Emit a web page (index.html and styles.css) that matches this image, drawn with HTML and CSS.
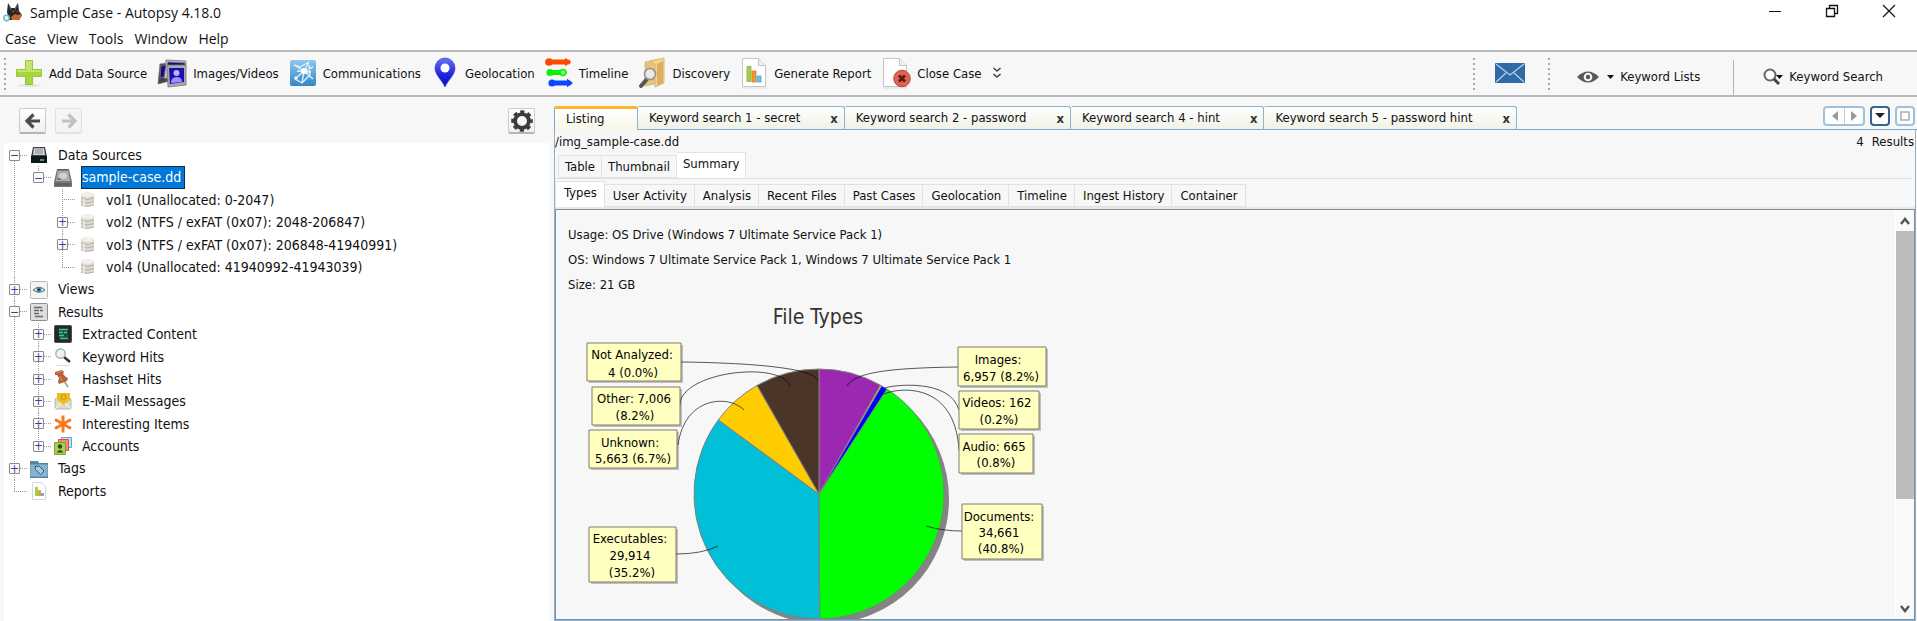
FILE: index.html
```html
<!DOCTYPE html>
<html lang="en">
<head>
<meta charset="utf-8">
<title>Sample Case - Autopsy 4.18.0</title>
<link rel="stylesheet" href="styles.css">
</head>
<body>
<header class="titlebar">
  <svg class="app-icon" width="20" height="20" viewBox="0 0 20 20"><path d="M5 1l3 5h4l3-5 1 8 3 4-3 5H6L4 10z" fill="#27272b"/><path d="M6 3l2 5M14 3l-2 5" fill="none" stroke="#6a6a72"/><path d="M8 15l4-3 3 1 3-1 1 2-4 4H9z" fill="#c4682a"/><path d="M9 9l2 1M14 9l1 1" stroke="#b86a30"/><circle cx="3.500" cy="16" r="2.800" fill="#dff3fa" stroke="#6fb0c8" stroke-width="1.300"/></svg>
  <h1 class="title">Sample Case - Autopsy 4.18.0</h1>
  <div class="window-controls">
    <button aria-label="Minimize"><svg width="14" height="14" viewBox="0 0 14 14"><path d="M1 7.500h12" stroke="#111" fill="none"/></svg></button>
    <button aria-label="Restore"><svg width="14" height="14" viewBox="0 0 14 14"><path d="M1.500 4.500h8v8h-8zM4.500 4V1.500h8v8H10" stroke="#111" stroke-width="1.300" fill="none"/></svg></button>
    <button aria-label="Close"><svg width="14" height="14" viewBox="0 0 14 14"><path d="M1 1l12 12M13 1L1 13" stroke="#111" stroke-width="1.200" fill="none"/></svg></button>
  </div>
</header>
<nav class="menubar">
  <button>Case</button><button>View</button><button>Tools</button><button>Window</button><button>Help</button>
</nav>
<div class="toolbar">
  <span class="grip"></span>
  <div class="tools">
    <button class="tool"><svg width="28" height="32" viewBox="0 0 28 32"><ellipse cx="14" cy="28.500" rx="12" ry="1.500" fill="#e2e2e2"/><path d="M10.500 3.500h7v9h9v7h-9v8h-7v-8h-9v-7h9z" fill="#a9d63c" stroke="#98c53a"/><path d="M11 4h6v9h9v2H2v-2h9z" fill="#c3e46e"/></svg>Add Data Source</button>
    <button class="tool"><svg width="30" height="32" viewBox="0 0 30 32"><g stroke="#777" stroke-width=".8"><path d="M3 7l20-2-3 17-19 5z" fill="#444"/><path d="M9 3l20 1-1 21-21-4z" fill="#b9bbbf"/><path d="M11 5l17 1v4L10 9z" fill="#160a86"/><path d="M4 9l5-1-2 12-4 1z" fill="#160a86"/><path d="M10 8h19v20l-18 2z" fill="#a7a9ad"/></g><path d="M12 11h15v14l-14 2z" fill="#1c0fb0"/><circle cx="19.500" cy="16" r="3" fill="#b9b4ff"/><path d="M14 26q0-6 5.500-6t5.500 5z" fill="#9a92ff"/></svg>Images/Videos</button>
    <button class="tool"><svg width="28" height="32" viewBox="0 0 28 32"><defs><linearGradient id="sky" x2="0" y2="1"><stop stop-color="#8cc8ee"/><stop offset="1" stop-color="#3487c4"/></linearGradient></defs><rect x="1" y="3" width="26" height="26" rx="2" fill="url(#sky)"/><path d="M15 14L5 8M15 14l5-9M15 14l9-4M15 14l-9 8M15 14l-2 12M15 14l9 8M5 8l6 2 9-5M6 22l7 4 8-8-1-10M8 14l14 1" stroke="#dff1fc" stroke-width="1.400" fill="none"/><circle cx="15" cy="14" r="3" fill="#fff"/><circle cx="7" cy="21" r="1.800" fill="#e8f5fd"/></svg>Communications</button>
    <button class="tool"><svg width="28" height="32" viewBox="0 0 28 32"><defs><linearGradient id="pin" x2="0" y2="1"><stop stop-color="#6a72f2"/><stop offset=".6" stop-color="#1c20e0"/><stop offset="1" stop-color="#0a0ad8"/></linearGradient></defs><path d="M14 30C11 23 4 18 4 11a10 10 0 0 1 20 0c0 7-7 12-10 19z" fill="url(#pin)" stroke="#3c3ccf" stroke-width=".7"/><circle cx="14" cy="11" r="4.500" fill="#fff"/></svg>Geolocation</button>
    <button class="tool"><svg width="28" height="32" viewBox="0 0 28 32"><g stroke-width="5" stroke-linecap="round"><path d="M3 5h20" stroke="#ff4a00"/><path d="M5 15.500h14" stroke="#0cf00c"/><path d="M7 26h17" stroke="#0a48ff"/></g><circle cx="4" cy="5" r="3.800" fill="#ff4a00"/><path d="M20 .8l6 4.200-6 4.200z" fill="#ff4a00"/><circle cx="5" cy="15.500" r="3.600" fill="#0cf00c"/><circle cx="18" cy="15.500" r="3" fill="#7dfb7d" stroke="#0cf00c" stroke-width="1.600"/><circle cx="7" cy="26" r="3.600" fill="#0a48ff"/><path d="M22 21.800l6 4.200-6 4.200z" fill="#0a48ff"/></svg>Timeline</button>
    <button class="tool"><svg width="28" height="32" viewBox="0 0 28 32"><path d="M7 5l14-3v24L7 29z" fill="#e8c27c" stroke="#cfa65e" stroke-width=".6"/><path d="M12 4l14-3v25l-9 4V7z" fill="#f2d494" stroke="#d5ad66" stroke-width=".8"/><path d="M19 7l6-3v22l-6 3z" fill="#dcae62"/><path d="M9 22l-6 7" stroke="#555" stroke-width="4" stroke-linecap="round"/><circle cx="12" cy="17" r="5.500" fill="#eef0f0" fill-opacity=".85" stroke="#909498" stroke-width="1.600"/></svg>Discovery</button>
    <button class="tool"><svg width="28" height="32" viewBox="0 0 28 32"><path d="M2 31h25" stroke="#ddd"/><path d="M2.500 1.500h16l7 7v21h-23z" fill="#fff" stroke="#c4c4c4"/><path d="M18.500 1.500v7h7" fill="#f0f0f0" stroke="#c4c4c4"/><path d="M7 9.500h4v15H7z" fill="#a4cf4e" stroke="#86b336" stroke-width=".8"/><path d="M12 14h4v11h-4z" fill="#f09a3a" stroke="#d47d22" stroke-width=".8"/><path d="M17 19h4v6h-4z" fill="#6cc4e8" stroke="#45a6d0" stroke-width=".8"/></svg>Generate Report</button>
    <button class="tool"><svg width="30" height="32" viewBox="0 0 30 32"><path d="M2 31h25" stroke="#ddd"/><path d="M2.500 1.500h16l7 7v21h-23z" fill="#fff" stroke="#c4c4c4"/><path d="M18.500 1.500v7h7" fill="#f0f0f0" stroke="#c4c4c4"/><circle cx="21" cy="21.500" r="8.300" fill="#df6450" stroke="#b8483a"/><path d="M18 18.500l6 6M24 18.500l-6 6" stroke="#5c1810" stroke-width="2.600"/></svg>Close Case</button>
    <button class="tool" aria-label="More"><svg width="10" height="14" viewBox="0 0 10 14"><path d="M1.500 2L5 5l3.500-3M1.500 8L5 11l3.500-3" fill="none" stroke="#444" stroke-width="1.600"/></svg></button>
  </div>
  <div class="tools-right">
    <span class="grip"></span>
    <button class="mail" aria-label="Messages"><svg width="32" height="22" viewBox="0 0 32 22"><rect x="1" y="1" width="30" height="20" rx="1" fill="#2e6aa5"/><path d="M2 2l14 11L30 2M2 20l10-9M30 20l-10-9" fill="none" stroke="#b9d2e8" stroke-width="1.200"/></svg></button>
    <span class="grip"></span>
    <button class="tool lists"><svg width="38" height="16" viewBox="0 0 38 16"><path d="M1 8Q12-3 23 8 12 19 1 8z" fill="#555a5c"/><circle cx="12" cy="8" r="4.300" fill="#f7f7f7"/><circle cx="12" cy="8" r="2.200" fill="#555a5c"/><path d="M31 6h7l-3.500 4z" fill="#111"/></svg>Keyword Lists</button>
    <span class="divider"></span>
    <button class="tool search"><svg width="20" height="20" viewBox="0 0 20 20"><circle cx="7" cy="8" r="5.500" fill="#fff" stroke="#666" stroke-width="2"/><path d="M11 12l5 5" stroke="#444" stroke-width="3"/><path d="M13 8h7l-3.500 4z" fill="#111"/></svg>Keyword Search</button>
  </div>
</div>

<main class="workspace">
  <section class="explorer">
    <div class="nav-row">
      <button class="nav-btn" aria-label="Back"><svg width="18" height="18" viewBox="0 0 18 18"><path d="M16 9H3M9.500 2.500L3 9l6.500 6.500" fill="none" stroke="#4c4c4c" stroke-width="3.200"/></svg></button>
      <button class="nav-btn off" aria-label="Forward" disabled><svg width="18" height="18" viewBox="0 0 18 18"><path d="M2 9h13M8.500 2.500L15 9l-6.500 6.500" fill="none" stroke="#c2c2c2" stroke-width="3.200"/></svg></button>
      <button class="nav-btn gear" aria-label="Settings"><svg width="22" height="22" viewBox="0 0 22 22"><circle cx="11" cy="11" r="9" fill="none" stroke="#3c3c3c" stroke-width="3.600" stroke-dasharray="4 3.069" stroke-dashoffset="2"/><circle cx="11" cy="11" r="6.900" fill="none" stroke="#3c3c3c" stroke-width="3.800"/></svg></button>
    </div>
    <ul class="tree">
      <li><div class="row"><button class="exp" aria-label="Collapse">−</button><i class="link"></i><svg width="18" height="18" viewBox="0 0 18 18"><path d="M3 1h12l2 10H1z" fill="#3c4044"/><path d="M4 2h10l1 7H3z" fill="#d4d6d8"/><path d="M5 3h8M5 5h8M5 7h8" stroke="#888"/><path d="M1 10h16v7H1z" fill="#121416"/><path d="M10 13h4v2h-4z" fill="#20a8a0"/></svg><span>Data Sources</span></div>
        <ul>
          <li><div class="row"><button class="exp" aria-label="Collapse">−</button><i class="link"></i><svg width="18" height="18" viewBox="0 0 18 18"><path d="M3 0h12l3 13v5H0v-5z" fill="#77797c"/><path d="M4 1h10l2 11H2z" fill="#b0b2b4"/><ellipse cx="9" cy="7" rx="5" ry="4" fill="#cfd1d2" stroke="#8d8f91" stroke-width=".8"/><path d="M4 1h10M3 10h4" stroke="#444"/><path d="M1 14h16v3H1z" fill="#606366"/></svg><span class="selected">sample-case.dd</span></div>
            <ul>
              <li><div class="row"><i class="leaf"></i><i class="link"></i><svg width="18" height="18" viewBox="0 0 18 18"><use href="#vol"/></svg><span>vol1 (Unallocated: 0-2047)</span></div></li>
              <li><div class="row"><button class="exp" aria-label="Expand">+</button><i class="link"></i><svg width="18" height="18" viewBox="0 0 18 18"><g id="vol"><path d="M3 4v10q6 3 13 0V4z" fill="#dcd9d0"/><ellipse cx="9.500" cy="4" rx="6.500" ry="2.200" fill="#f3f1ec" stroke="#dedbd3" stroke-width=".6"/><path d="M3 7q6 3 13 0M3 10.500q6 3 13 0M3 14q6 3 13 0" fill="none" stroke="#b5b1a5"/><path d="M6 7.500v8" stroke="#efede7" stroke-width="1.500"/></g></svg><span>vol2 (NTFS / exFAT (0x07): 2048-206847)</span></div></li>
              <li><div class="row"><button class="exp" aria-label="Expand">+</button><i class="link"></i><svg width="18" height="18" viewBox="0 0 18 18"><use href="#vol"/></svg><span>vol3 (NTFS / exFAT (0x07): 206848-41940991)</span></div></li>
              <li><div class="row"><i class="leaf"></i><i class="link"></i><svg width="18" height="18" viewBox="0 0 18 18"><use href="#vol"/></svg><span>vol4 (Unallocated: 41940992-41943039)</span></div></li>
            </ul>
          </li>
        </ul>
      </li>
      <li><div class="row"><button class="exp" aria-label="Expand">+</button><i class="link"></i><svg width="18" height="18" viewBox="0 0 18 18"><rect x=".5" y=".5" width="17" height="17" rx="1" fill="#f3f3f3" stroke="#b9b9b9"/><path d="M3 9Q9 3.500 15 9 9 13.500 3 9z" fill="#e6eef0" stroke="#666"/><circle cx="9" cy="8.800" r="2.500" fill="#2c93a4"/><circle cx="9" cy="8.800" r="1" fill="#123"/></svg><span>Views</span></div></li>
      <li><div class="row"><button class="exp" aria-label="Collapse">−</button><i class="link"></i><svg width="18" height="18" viewBox="0 0 18 18"><rect x=".5" y=".5" width="17" height="17" rx="1" fill="#dedede" stroke="#8e8e8e"/><path d="M4 4.500h8M4 7.500h5M10 7.500h3M4 10.500h5M5 13.500h8" stroke="#666" stroke-width="1.400"/></svg><span>Results</span></div>
        <ul>
          <li><div class="row"><button class="exp" aria-label="Expand">+</button><i class="link"></i><svg width="18" height="18" viewBox="0 0 18 18"><rect x=".5" y=".5" width="17" height="17" rx="1" fill="#24282a" stroke="#4c5052"/><path d="M4 4h10v10H6z" fill="#1d4d40"/><path d="M5 4.500h9M5 7.500h4M10 7.500h3M5 10.500h5M6 13.500h8" stroke="#3cc49a" stroke-width="1.600"/></svg><span>Extracted Content</span></div></li>
          <li><div class="row"><button class="exp" aria-label="Expand">+</button><i class="link"></i><svg width="18" height="18" viewBox="0 0 18 18"><path d="M10 9l6 5" stroke="#333" stroke-width="2.400"/><circle cx="6.500" cy="5.500" r="4.700" fill="#e9f2f4" stroke="#a0a8aa" stroke-width="1.300"/><path d="M2 17.500h14" stroke="#e0e0e0"/></svg><span>Keyword Hits</span></div></li>
          <li><div class="row"><button class="exp" aria-label="Expand">+</button><i class="link"></i><svg width="18" height="18" viewBox="0 0 18 18"><path d="M10 11l4 6" stroke="#999" stroke-width="1.400"/><path d="M1 2l7-2 2 2-1 2 3 3 2 1-1 3-8 3-1-2 1-4-2-3H1z" fill="#b5613a"/><path d="M3 3l5-2M6 6l2 5" stroke="#d48a62" stroke-width="1.300"/></svg><span>Hashset Hits</span></div></li>
          <li><div class="row"><button class="exp" aria-label="Expand">+</button><i class="link"></i><svg width="18" height="18" viewBox="0 0 18 18"><path d="M1 7l8-5 8 5v10H1z" fill="#dcdcd4" stroke="#a8a8a0" stroke-width=".8"/><path d="M3 1h13v7l-6.500 5L3 8z" fill="#efbd20"/><circle cx="9.500" cy="5" r="2.500" fill="none" stroke="#c48e0a"/><path d="M1 17l6-6M17 17l-6-6" stroke="#fff"/></svg><span>E-Mail Messages</span></div></li>
          <li><div class="row"><button class="exp" aria-label="Expand">+</button><i class="link"></i><svg width="18" height="18" viewBox="0 0 18 18"><path d="M9 .5v17M1 4.500l16 9M17 4.500l-16 9" stroke="#f97a1c" stroke-width="3"/></svg><span>Interesting Items</span></div></li>
          <li><div class="row"><button class="exp" aria-label="Expand">+</button><i class="link"></i><svg width="18" height="18" viewBox="0 0 18 18"><path d="M7.500.5h10v10h-10z" fill="#bfe3f5" stroke="#56a8d6"/><path d="M4.500 2.500h10v11h-10z" fill="#f58a78" stroke="#e0503c"/><path d="M.5 5.500h11v12H.5z" fill="#a4d154" stroke="#75a828"/><circle cx="6" cy="9.500" r="2.200" fill="#34441c"/><path d="M2.500 15.500q3.500-5 7 0z" fill="#34441c"/></svg><span>Accounts</span></div></li>
        </ul>
      </li>
      <li><div class="row"><button class="exp" aria-label="Expand">+</button><i class="link"></i><svg width="18" height="18" viewBox="0 0 18 18"><path d="M0 1h8l1 2h9v15H0z" fill="#5787a8"/><path d="M0 4h18v13H0z" fill="#86b3d0" stroke="#4f7f9f" stroke-width=".8"/><path d="M5 6.500l4-.5 5 5-3.500 3.500-5-5z" fill="#a9cce0" stroke="#2f5670"/></svg><span>Tags</span></div></li>
      <li><div class="row"><i class="leaf"></i><i class="link"></i><svg width="18" height="18" viewBox="0 0 18 18"><path d="M2.500.5h9l4 4v13h-13z" fill="#fff" stroke="#d5d5d5"/><path d="M5 5h3v9H5z" fill="#a4cf4e"/><path d="M8 8h3v6H8z" fill="#f09a3a"/><path d="M11 11h3v3h-3z" fill="#5cb8e0"/></svg><span>Reports</span></div></li>
    </ul>
  </section>

  <section class="viewer">
    <div class="doc-tabs">
      <button class="doc-tab active">Listing</button>
      <button class="doc-tab">Keyword search 1 - secret<b>x</b></button>
      <button class="doc-tab">Keyword search 2 - password<b>x</b></button>
      <button class="doc-tab">Keyword search 4 - hint<b>x</b></button>
      <button class="doc-tab">Keyword search 5 - password hint<b>x</b></button>
      <div class="tab-controls">
        <span class="pair"><button aria-label="Previous tab"><svg width="8" height="12" viewBox="0 0 8 12"><path d="M7 1v10L1 6z" fill="#999"/></svg></button><button aria-label="Next tab"><svg width="8" height="12" viewBox="0 0 8 12"><path d="M1 1v10l6-5z" fill="#999"/></svg></button></span>
        <button class="ctl strong" aria-label="Tab list"><svg width="12" height="6" viewBox="0 0 12 6"><path d="M1 0h10L6 5z" fill="#222"/></svg></button>
        <button class="ctl" aria-label="Maximize"><svg width="10" height="10" viewBox="0 0 10 10"><path d="M1 1h8v8H1z" fill="none" stroke="#aaa" stroke-width="1.500"/></svg></button>
      </div>
    </div>
    <div class="listing">
      <div class="path-row"><span>/img_sample-case.dd</span><span class="count"><span>4</span><span>Results</span></span></div>
      <div class="tabs first"><button>Table</button><button>Thumbnail</button><button class="on">Summary</button></div>
      <div class="tabs second"><button class="on">Types</button><button>User Activity</button><button>Analysis</button><button>Recent Files</button><button>Past Cases</button><button>Geolocation</button><button>Timeline</button><button>Ingest History</button><button>Container</button></div>
      <div class="panel">
        <div class="content">
          <p>Usage: OS Drive (Windows 7 Ultimate Service Pack 1)</p>
          <p>OS: Windows 7 Ultimate Service Pack 1, Windows 7 Ultimate Service Pack 1</p>
          <p>Size: 21 GB</p>
          <svg class="chart" width="520" height="350" viewBox="0 0 520 350" role="img" aria-label="File Types">
            <text class="chart-title" x="258" y="34">File Types</text>
            <circle cx="264" cy="209" r="125" fill="#848484"/>
            <g stroke="#808080" stroke-linejoin="round">
              <path d="M259 204V79A125 125 0 0 1 320.500 95.200z" fill="#9c27b0"/>
              <path d="M259 204L320.500 95.200A125 125 0 0 1 321.800 95.900z" fill="#ffeb3b"/>
              <path d="M259 204L321.800 95.900A125 125 0 0 1 327 99.100z" fill="#0000ff" stroke-width=".5"/>
              <path d="M259 204L327 99.100A125 125 0 0 1 259.700 329z" fill="#00ff00"/>
              <path d="M259 204L259.700 329A125 125 0 0 1 158.300 129.900z" fill="#00bfd6"/>
              <path d="M259 204L158.300 129.900A125 125 0 0 1 197.100 95.400z" fill="#ffcc00"/>
              <path d="M259 204L197.100 95.400A125 125 0 0 1 259 79z" fill="#4a3528"/>
            </g>
            <g fill="none" stroke="#000" stroke-opacity=".65">
              <path d="M121 72C200 73 256 79 258 91"/><path d="M120 115C120 82 220 70 230 96"/><path d="M118 155C125 105 170 105 184 120"/><path d="M116 264Q142 264 158 256"/>
              <path d="M398 77C330 78 295 82 287 96"/><path d="M399 120C390 88 332 95 325 98"/><path d="M399 160C395 92 340 97 324 104"/><path d="M402 241Q382 241 366 236"/>
            </g>
            <g fill="#000" fill-opacity=".22"><path d="M29 55h94v38H29zM34 99h88v38H34zM31 142h88v38H31zM31 239h87v55H31zM400 59h88v39h-88zM401 103h80v38h-80zM401 146h74v39h-74zM404 216h80v55h-80z"/></g>
            <g fill="#ffffc0" stroke="#7c7c6c"><path d="M27 53h94v38H27zM32 97h88v38H32zM29 140h88v38H29zM29 237h87v55H29zM398 57h88v39h-88zM399 101h80v38h-80zM399 144h74v39h-74zM402 214h80v55h-80z"/></g>
            <g class="chart-labels">
              <text x="72" y="69">Not Analyzed:</text><text x="73" y="87">4 (0.0%)</text>
              <text x="74" y="113">Other: 7,006</text><text x="75" y="130">(8.2%)</text>
              <text x="70" y="157">Unknown:</text><text x="73" y="173">5,663 (6.7%)</text>
              <text x="70" y="253">Executables:</text><text x="70" y="270">29,914</text><text x="72" y="287">(35.2%)</text>
              <text x="438" y="74">Images:</text><text x="441" y="91">6,957 (8.2%)</text>
              <text x="437" y="117">Videos: 162</text><text x="439" y="134">(0.2%)</text>
              <text x="434" y="161">Audio: 665</text><text x="436" y="177">(0.8%)</text>
              <text x="439" y="231">Documents:</text><text x="439" y="247">34,661</text><text x="441" y="263">(40.8%)</text>
            </g>
          </svg>
        </div>
        <div class="scrollbar">
          <button aria-label="Scroll up"><svg width="12" height="10" viewBox="0 0 12 10"><path d="M2 8l4-5 4 5" fill="none" stroke="#555" stroke-width="2.400"/></svg></button>
          <div class="track"><div class="thumb"></div></div>
          <button aria-label="Scroll down"><svg width="12" height="10" viewBox="0 0 12 10"><path d="M2 2l4 5 4-5" fill="none" stroke="#555" stroke-width="2.400"/></svg></button>
        </div>
      </div>
    </div>
  </section>
</main>
</body>
</html>
```
FILE: styles.css
```css
* { box-sizing: border-box; }
body {
  margin: 0;
  height: 100vh;
  display: flex;
  flex-direction: column;
  overflow: hidden;
  background: #fff;
  color: #111;
  font: 13px "DejaVu Sans Condensed", "DejaVu Sans", sans-serif;
}
button {
  margin: 0;
  padding: 0;
  border: 0;
  background: none;
  color: inherit;
  font: inherit;
  white-space: nowrap;
}
svg { display: block; flex: none; }
ul { list-style: none; margin: 0; padding: 0; }
p, h1 { margin: 0; font-weight: normal; }

.titlebar {
  display: flex;
  align-items: center;
  gap: 7px;
  height: 26px;
  padding: 0 0 2px 3px;
  font: 14px "Open Sans", sans-serif;
}
.title { font-size: 14px; }
.window-controls {
  display: flex;
  gap: 43px;
  margin-left: auto;
  padding: 0 21px 2px 0;
}
.menubar {
  display: flex;
  gap: 11px;
  height: 24px;
  padding: 0 5px;
  font: 14px "Open Sans", sans-serif;
}

.toolbar {
  display: flex;
  justify-content: space-between;
  align-items: stretch;
  height: 47px;
  border-top: 2px solid #bbb;
  border-bottom: 2px solid #b8b8b8;
  background: #f7f7f7;
}
.grip {
  flex: none;
  width: 2px;
  margin: 6px 0 4px;
  background: repeating-linear-gradient(#aaa 0 2px, transparent 2px 5px);
}
.toolbar > .grip { margin-left: 4px; }
.tools {
  flex: 1;
  display: flex;
  align-items: center;
  gap: 10px;
  padding: 0 0 1px 9px;
}
.tool { display: flex; align-items: center; gap: 6px; }
.tools-right { display: flex; }
.mail { padding: 0 22px 2px 19px; }
.lists { padding: 6px 33px 0 26px; }
.search { padding: 6px 34px 0 29px; }
.divider { width: 1px; margin-top: 8px; background: #b5b5b5; }

.workspace { flex: 1; min-height: 0; display: flex; background: #f7f7f7; }
.explorer { flex: none; width: 28.9%; min-width: 400px; display: flex; flex-direction: column; }
.nav-row { display: flex; gap: 9px; padding: 11px 19px 9px 19px; }
.nav-btn {
  display: flex;
  align-items: center;
  justify-content: center;
  width: 27px;
  height: 26px;
  border: 1px solid #ccc;
  border-bottom: 2px solid #b5b5b5;
  border-radius: 2px;
  background: linear-gradient(#fff, #f0f0f0);
}
.nav-btn.off { border-color: #e2e2e2; background: #f4f4f4; }
.gear { margin-left: auto; }

.tree {
  flex: 1;
  min-height: 0;
  margin: 0 5px 0 4px;
  padding: 1px 0 0 5px;
  background: #fff;
  font-size: 14px;
  line-height: 1.6;
}
.tree li {
  background: repeating-linear-gradient(#999 0 1px, #fff 1px 2px) 5px 0 / 1px 100% no-repeat;
}
.tree li:last-child { background-size: 1px 11px; }
.tree > li:first-child { background-position: 5px 11px; }
.tree ul { margin-left: 24px; }
.tree ul li:only-child { background-size: 1px 11px; }
.row { display: flex; align-items: center; }
.exp {
  flex: none;
  width: 11px;
  height: 11px;
  border: 1px solid #8a8a8a;
  border-radius: 1px;
  background: #fafafa;
  color: #2c4a9c;
  font-size: 12px;
  line-height: 8px;
}
.leaf, .link {
  flex: none;
  height: 1px;
  background: repeating-linear-gradient(90deg, #999 0 1px, #fff 1px 2px);
}
.leaf { width: 6px; margin-left: 5px; }
.link { width: 8px; margin-right: 2px; }
.row span { margin-left: 9px; padding: 0 1px; white-space: nowrap; }
.row .selected { padding-right: 4px; background: #0078d7; color: #fff; outline: 1px solid #0b2d4d; outline-offset: -1px; }

.viewer { flex: 1; min-width: 0; display: flex; flex-direction: column; padding-top: 9px; }
.doc-tabs { display: flex; border-bottom: 1px solid #7fa8cc; }
.doc-tab {
  display: flex;
  align-items: center;
  gap: 30px;
  height: 23px;
  padding: 0 6px 1px 11px;
  border: 1px solid #8fb2cf;
  border-width: 1px 1px 0 0;
  border-radius: 2px 3px 0 0;
  background: linear-gradient(#fff, #f0f1e6);
}
.doc-tab b { padding-top: 2px; color: #333; }
.doc-tab.active {
  min-width: 84px;
  height: 24px;
  margin-bottom: -1px;
  padding-bottom: 3px;
  border-top: 3px solid #fdb52a;
  border-left: 1px solid #7fa8cc;
  background: linear-gradient(#fff, #f7f6e8);
}
.tab-controls { display: flex; gap: 5px; margin-left: auto; padding-right: 2px; }
.pair { display: flex; height: 20px; border: 2px solid #9fc0da; border-radius: 4px; background: #fff; }
.pair button { display: flex; align-items: center; justify-content: center; width: 19px; }
.pair button + button { border-left: 1px solid #ccc; }
.ctl {
  display: flex;
  align-items: center;
  justify-content: center;
  width: 20px;
  height: 20px;
  border: 2px solid #9fc0da;
  border-radius: 4px;
  background: #fff;
}
.ctl.strong { border-color: #34628f; }

.listing {
  flex: 1;
  min-height: 0;
  display: flex;
  flex-direction: column;
  margin-right: 1px;
  border: 1px solid #8fb2cf;
  border-top: 0;
}
.path-row { display: flex; justify-content: space-between; padding: 3px 0 1px; line-height: 18px; }
.count { display: flex; gap: 8px; padding-right: 1px; }
.tabs { display: flex; align-items: flex-end; }
.tabs button {
  height: 23px;
  padding: 0 6px;
  border: 1px solid #e2e2e2;
  border-left-width: 0;
}
.tabs button:first-child { border-left-width: 1px; }
.tabs button.on { height: 26px; padding-bottom: 4px; background: #fff; border-bottom: 0; }
.tabs.first { margin-right: 3px; padding-left: 3px; border-bottom: 1px solid #e0e0e0; }
.tabs.second { margin-top: 2px; border-bottom: 2px solid #e8e8e8; }
.tabs.second button { padding-left: 8px; padding-right: 7px; }
.panel {
  flex: 1;
  min-height: 0;
  display: flex;
  border: 1px solid #8090a2;
}
.content { flex: 1; overflow: hidden; padding: 12px 0 0 4px; }
.content p { padding-left: 8px; line-height: 25px; }
.chart { margin-top: -7px; }
.chart text { text-anchor: middle; }
.chart-title { font-size: 21px; fill: #333; }
.chart-labels { font-size: 13px; }
.scrollbar { display: flex; flex-direction: column; align-items: center; width: 19px; background: #f9f9f9; border-left: 1px solid #fff; }
.scrollbar button { height: 21px; }
.track { flex: 1; width: 100%; }
.thumb { height: 73%; background: #bcbcbc; }
```
